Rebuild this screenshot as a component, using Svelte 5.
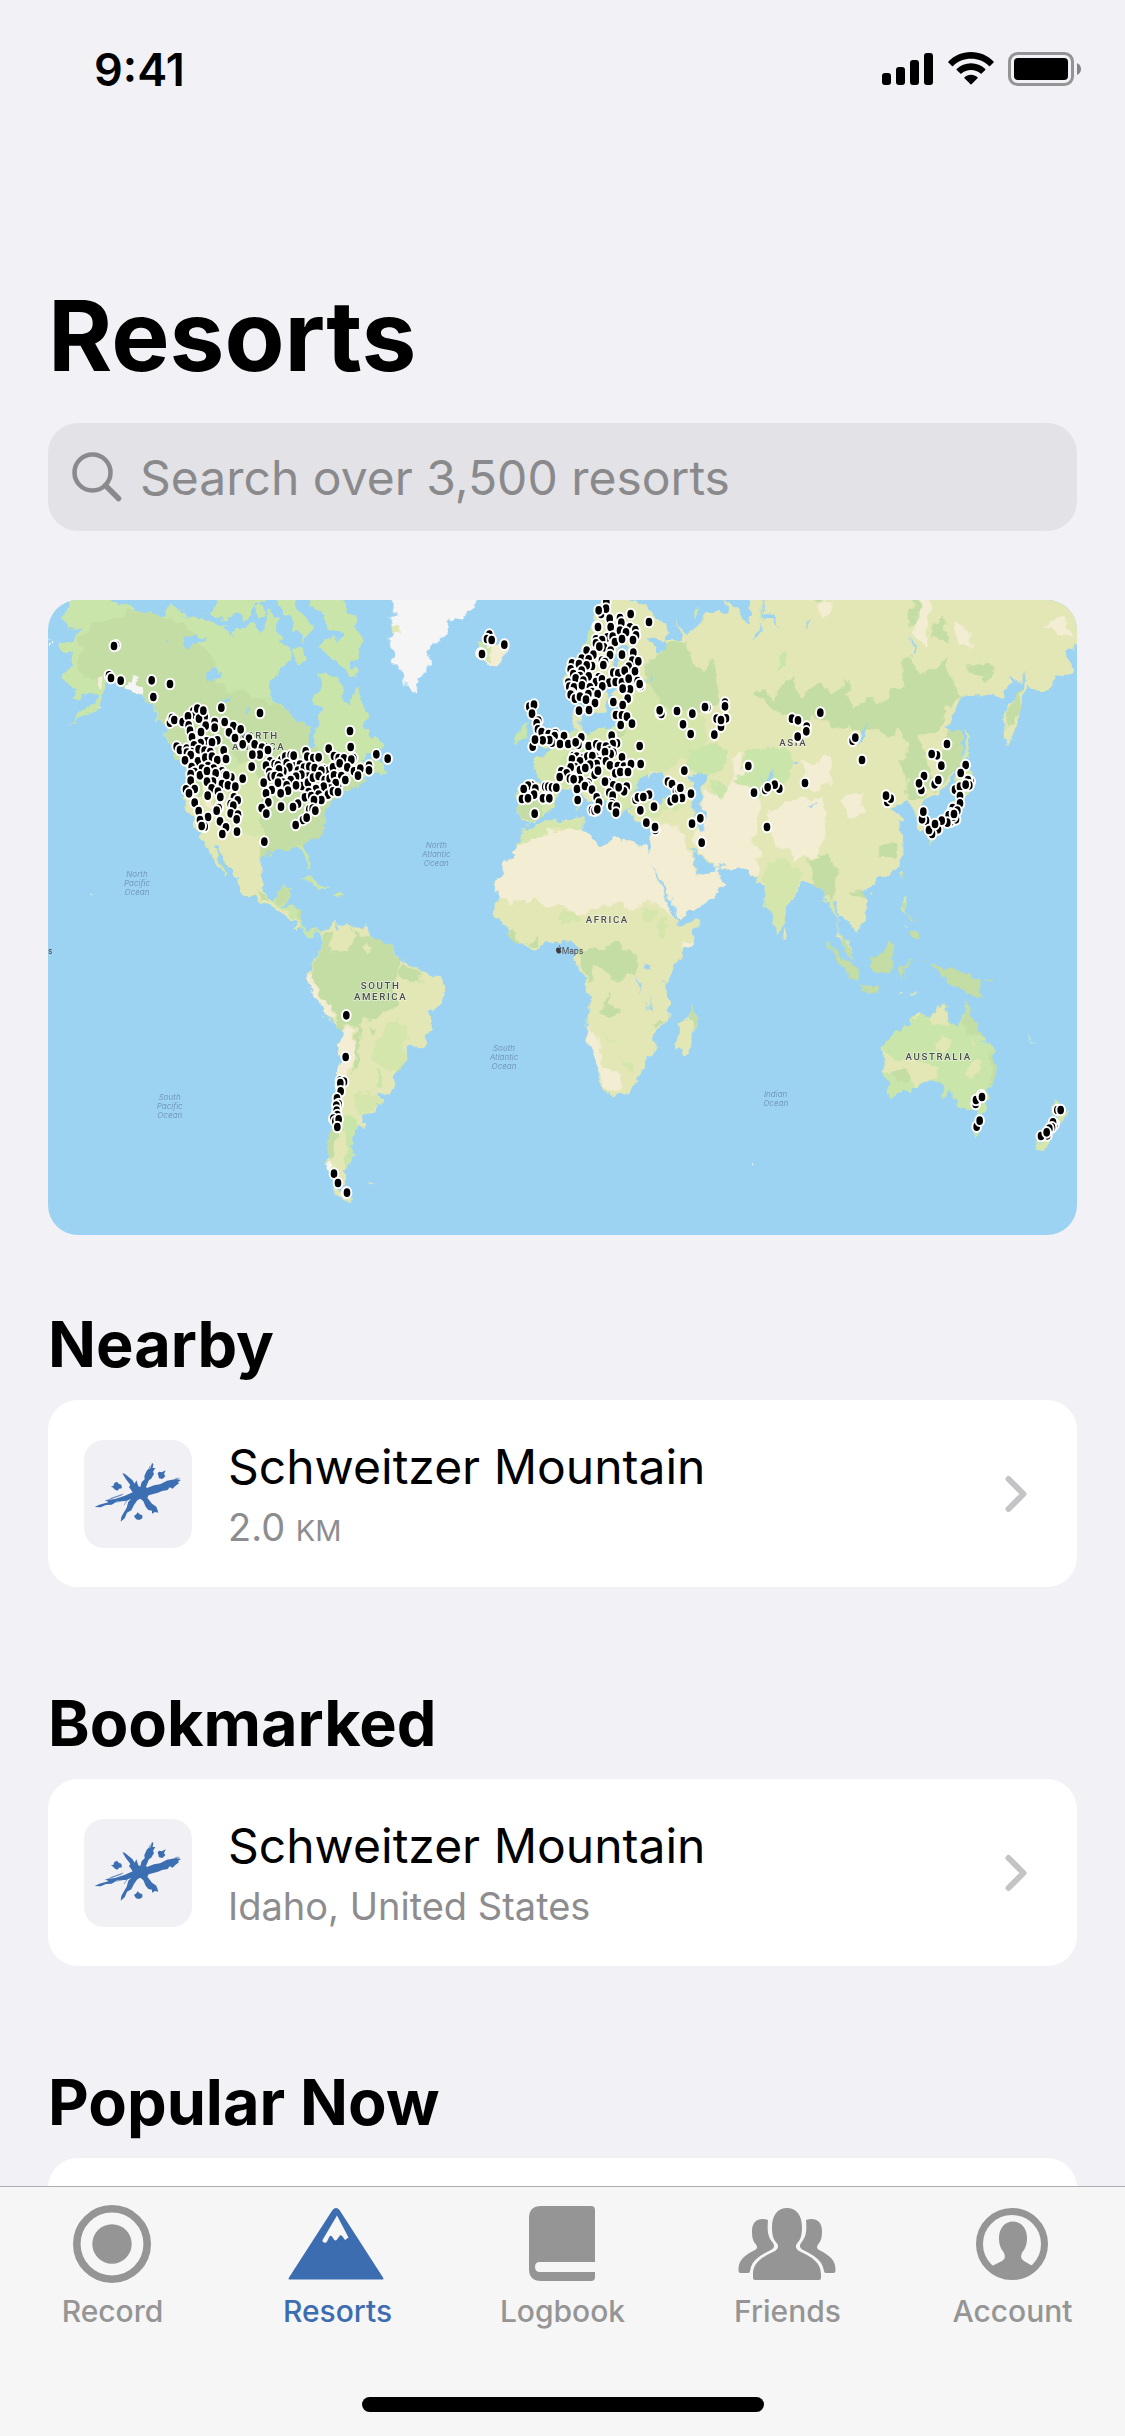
<script lang="ts">
	type Cluster = { x: number; y: number; points: string };

	// Resort positions, grouped by region. Each region has its own origin on the map.
	const clusters: Cluster[] = [
		{
			x: 0,
			y: 0,
			points: `204,136 198,138 183,226 189,234 218,242 311,241 366,252 316,291 520,323 636,339 906,393 366,368 372,354 379,360
				404,366 436,334 442,345 448,326 470,350 453,356 466,332 420,349 500,366 530,366 473,377 422,376 500,383 556,378 578,388
				426,392 459,396 543,397 432,412 561,414 603,416 508,421 476,424 458,429 492,427 584,433 620,433 386,440 396,450 416,446
				438,436 432,456 452,448 417,458 470,452 487,456 527,451 642,443 660,450 635,464 613,464 428,465 411,481 450,484 472,473
				492,470 508,480 534,477 611,500 480,498 462,506 431,501 440,516 497,506 522,514 456,526 477,513 503,520 428,522 530,524
				584,536 550,532 535,526 428,542 495,545 477,545 522,552 540,556 562,560 491,565 440,567 414,568 423,580 510,575 479,587
				517,591 558,592 569,601 440,608 548,612 556,617 452,633 512,624 506,632 548,640 570,644 480,651 566,658 456,660 516,664
				470,680 461,678 534,682 523,702 567,695 649,725 773,454 842,446 908,441 985,463 1019,476 666,484 700,480 712,470 728,466
				737,467 778,470 796,474 812,472 858,468 872,474 888,475 916,474 910,479 654,497 680,492 690,496 716,490 740,500 756,494
				724,502 664,516 684,520 706,514 693,508 668,530 680,528 696,532 750,512 768,503 784,500 800,504 826,508 842,512 855,502
				875,490 898,502 918,514 937,506 963,497 963,511 930,527 820,512 780,530 760,524 744,530 728,540 705,548 647,548 690,548
				716,556 762,558 744,556 780,548 795,533 812,528 830,540 845,536 858,526 880,528 892,540 870,560 863,549 846,566 827,560
				804,567 782,576 720,572 698,580 671,570 654,580 661,607 641,624 655,641 699,620 750,611 735,621 771,592 790,588 812,584
				822,598 840,584 855,574 870,576 820,600 798,600 784,628 794,626 802,632 765,660 776,653 743,675`
		},
		{
			x: 1056,
			y: 0,
			points: `268,104 261,117 275,120 313,134 242,160 246,162 619,5 603,42 618,26 596,31 629,56 660,54 692,42 747,66 664,68 590,80
				594,81 632,81 660,92 690,82 706,90 678,97 708,106 622,112 638,110 588,118 606,120 645,126 666,117 699,120 588,130 612,142
				632,152 598,140 560,152 580,164 630,165 666,164 700,158 545,176 566,178 606,182 615,186 697,182 715,184 516,190 537,192
				576,198 560,196 610,195 686,200 640,218 655,220 674,212 705,214 512,208 545,212 520,222 540,228 566,229 596,232 505,248
				527,235 550,242 588,246 606,238 628,248 647,246 666,247 686,236 713,243 722,258 719,252 690,268 668,266 508,260 522,262
				546,256 570,262 576,276 607,259 515,280 512,284 525,296 540,290 565,282 593,282 558,299 585,309 640,306 683,296 668,315
				537,332 567,330 648,345 666,346 681,350 662,375 696,371 780,340 784,342 779,331 831,333 877,341 849,373 872,402 922,322
				915,321 975,308 975,319 950,356 978,355 963,380 963,360 943,404 388,320 402,314 396,341 415,362 410,370 414,388 425,396
				446,402 466,400 464,408 438,420 456,428 448,420 428,421 398,440 405,419 492,408 480,432 505,432 544,412 535,434 527,427
				566,438 589,433 600,440 635,407 651,430 638,432 618,440 628,452 640,458 632,462 615,456 719,438 666,472 520,468 530,470
				516,478 548,476 562,470 586,470 598,484 577,468 618,484 590,492 570,494 540,484 526,502 512,502 540,510 556,504 484,514
				500,520 479,531 510,536 540,540 521,538 566,548 584,524 594,512 630,496 654,498 672,500 693,492 722,492 646,520 676,516
				661,516 684,516 853,512 624,546 615,545 640,556 680,560 672,574 656,562 394,556 384,557 371,567 406,566 436,560 445,560
				456,562 469,563 402,584 366,597 384,595 429,595 448,595 404,641 531,567 562,556 555,558 576,569 533,600 590,592 597,608
				576,630 584,632 592,628 628,578 638,587 636,610 634,618 650,620 648,638 804,545 816,552 828,574 836,570 841,564 873,581
				846,594 812,604 825,596 707,599 714,592 747,584 730,591 721,631 762,620 739,668 766,690 765,681 876,671 901,655 905,728
				1045,498 1063,578`
		},
		{
			x: 2076,
			y: 0,
			points: `241,338 156,356 174,361 200,380 199,394 173,410 195,549 118,566 104,554 76,570 83,562 42,578 25,498 81,681
				338,422 346,413 366,480 442,606 452,596 438,587 621,432 591,466 575,462 604,497 552,528 584,553 595,540 544,570 537,550
				558,662 546,658 550,635 677,495 662,519 692,545 684,540 676,556 645,569 660,560 688,556 677,554 660,588 660,610 638,624
				652,632 632,640 628,648 634,664 648,658 640,650 626,646 642,642 622,668 594,688 576,702 567,690 605,662 585,672`
		},
		{
			x: 0,
			y: 900,
			points: `895,346 893,471 876,542 888,545 876,556 877,549 878,574 867,595 872,612 865,617 866,632 868,645 856,656 862,664
				872,658 868,681 858,821 870,849 894,878 897,878`
		},
		{
			x: 1536,
			y: 900,
			points: `1247,612 1248,600 1264,586 1266,591 1250,680 1259,662 1492,630 1502,630 1484,672 1479,667 1476,682 1468,686
				1462,706 1443,708 1460,697`
		}
	];

	const markers = clusters.flatMap((c) =>
		c.points
			.trim()
			.split(/\s+/)
			.map((pair) => {
				const [px, py] = pair.split(',').map(Number);
				return { x: c.x + px, y: c.y + py };
			})
	);

	const places = [
		{ x: 632, y: 416, lines: ['NORTH', 'AMERICA'], kind: 'land' },
		{ x: 998, y: 1166, lines: ['SOUTH', 'AMERICA'], kind: 'land' },
		{ x: 1678, y: 969, lines: ['AFRICA'], kind: 'land' },
		{ x: 2236, y: 437, lines: ['ASIA'], kind: 'land' },
		{ x: 2672, y: 1380, lines: ['AUSTRALIA'], kind: 'land' },
		{ x: 267, y: 830, lines: ['North', 'Pacific', 'Ocean'], kind: 'sea' },
		{ x: 1165, y: 744, lines: ['North', 'Atlantic', 'Ocean'], kind: 'sea' },
		{ x: 365, y: 1499, lines: ['South', 'Pacific', 'Ocean'], kind: 'sea' },
		{ x: 1368, y: 1354, lines: ['South', 'Atlantic', 'Ocean'], kind: 'sea' },
		{ x: 2183, y: 1491, lines: ['Indian', 'Ocean'], kind: 'sea' }
	];

	const sections = [
		{ title: 'Nearby', resort: 'Schweitzer Mountain', detail: '2.0', unit: 'KM' },
		{ title: 'Bookmarked', resort: 'Schweitzer Mountain', detail: 'Idaho, United States', unit: '' }
	];

	const tabs = ['Record', 'Resorts', 'Logbook', 'Friends', 'Account'];

	let active = $state('Resorts');
	let query = $state('');
</script>

<div class="app">
	<header class="status-bar">
		<span class="time">9:41</span>
		<div class="status-icons">
			<svg width="52" height="34" viewBox="0 0 52 34" aria-hidden="true">
				<rect x="0" y="21" width="9" height="12" rx="3" />
				<rect x="14" y="15" width="9" height="18" rx="3" />
				<rect x="28" y="8" width="9" height="25" rx="3" />
				<rect x="42" y="1" width="9" height="32" rx="3" />
			</svg>
			<svg width="46" height="34" viewBox="0 0 46 34" aria-hidden="true">
				<path d="M23 0C14 0 6 3.600 0.400 9.500Q0 10 0.400 10.500L4 14Q4.500 14.400 5 14C10 9.300 16 6.800 23 6.800S36 9.300 41 14Q41.500 14.400 42 14L45.600 10.500Q46 10 45.600 9.500C40 3.600 32 0 23 0Z" />
				<path d="M23 11.200C17.500 11.200 12.500 13.300 8.700 16.900Q8.300 17.400 8.700 17.900L12.400 21.600Q12.900 22 13.400 21.600C16 19.300 19.300 18 23 18S30 19.300 32.600 21.600Q33.100 22 33.600 21.600L37.300 17.900Q37.700 17.400 37.300 16.900C33.500 13.300 28.500 11.200 23 11.200Z" />
				<path d="M23 22.800C20.400 22.800 18.200 23.700 16.500 25.200Q16 25.700 16.500 26.200L22.500 32.300Q23 32.800 23.500 32.300L29.500 26.200Q30 25.700 29.500 25.200C27.800 23.700 25.600 22.800 23 22.800Z" />
			</svg>
			<svg width="74" height="34" viewBox="0 0 74 34" aria-hidden="true">
				<rect x="1.500" y="1.500" width="63" height="31" rx="8" fill="none" stroke="#949496" stroke-width="3" />
				<rect x="6" y="6" width="54" height="22" rx="4" />
				<path d="M69 11Q73 13 73 17T69 23Z" fill="#858587" />
			</svg>
		</div>
	</header>

	<main>
		<h1>Resorts</h1>

		<label class="search">
			<svg width="50" height="50" viewBox="0 0 50 50" fill="none" aria-hidden="true">
				<circle cx="20.500" cy="20.500" r="18" stroke="currentColor" stroke-width="4.500" />
				<path d="M33.500 33.500L46.500 46.500" stroke="currentColor" stroke-width="5.500" stroke-linecap="round" />
			</svg>
			<input type="search" placeholder="Search over 3,500 resorts" aria-label="Search resorts" bind:value={query} />
		</label>

		<svg class="map" viewBox="0 0 3087 1905" role="img" aria-label="World map of resorts">
			<!-- Roughens coastlines and terrain borders -->
			<filter id="terrain" filterUnits="userSpaceOnUse" x="0" y="0" width="3087" height="1905" color-interpolation-filters="sRGB">
				<feTurbulence type="fractalNoise" baseFrequency="0.025" numOctaves="3" seed="4" />
				<feDisplacementMap in="SourceGraphic" scale="44" xChannelSelector="R" yChannelSelector="G" />
			</filter>

			<g filter="url(#terrain)">
				<!-- Americas -->
				<g class="green">
					<path d="M75 -30L62 25 38 50 65 75 90 92 75 125 35 130 30 140 62 150 72 165 78 195 50 212 45 240 62 265 85 275 80 290 110 285 135 275 148 290 130 310 100 340 68 374 110 350 150 318 165 285 185 240 225 252 270 275 290 295 312 305 330 340 345 385 365 425 390 465 412 490 410 550 405 590 425 640 440 690 465 700 480 740 505 790 532 832 525 800 505 765 490 735 500 730 530 785 555 820 572 850 575 875 610 895 650 915 690 930 720 945 745 965 750 985 785 1012 800 997 818 1012 820 1000 800 990 775 997 760 975 760 930 735 920 702 918 720 905 732 858 705 857 695 885 668 898 645 875 635 830 640 775 660 758 700 748 740 745 765 752 778 775 785 808 792 795 788 760 776 738 800 705 825 680 830 640 838 610 865 598 885 570 895 548 915 562 960 538 940 525 1000 522 1028 508 1005 500 1005 485 960 486 925 482 960 462 1000 455 1003 440 965 400 945 375 960 345 935 290 925 265 910 308 885 290 880 250 855 228 810 222 815 260 800 300 817 340 800 390 798 440 783 438 772 375 745 355 705 328 668 300 663 265 672 235 700 200 735 160 710 140 688 125 700 95 660 60 640 95 610 75 570 80 552 110 525 75 490 78 440 52 410 50 375 5 350 40 310 50 260 25 200 12 150 -30Z" />
					<path d="M470 -20L510 15 480 40 530 55 560 40 600 58 640 20 660 -20ZM680 -20L700 40 730 50 750 95 770 120 800 80 760 40 740 -20ZM775 -20L800 25 830 50 840 90 880 100 870 130 835 115 810 150 850 170 890 210 922 228 915 190 935 170 950 110 915 75 930 50 890 30 880 -20ZM735 155L760 130 780 180 750 195ZM625 25L650 15 655 50 635 50ZM660 30L690 60 680 95 655 75Z" />
					<path d="M755 838L790 835 840 865 800 858ZM850 885L875 872 890 885 860 892ZM305 310L335 360 330 378Z" />
				</g>
				<path class="deep" d="M150 70L200 60 260 25 330 45 390 60 430 100 460 125 500 190 510 240 540 270 600 280 660 300 705 330 745 355 772 375 783 438 800 440 830 460 880 465 960 545 885 570 830 640 825 680 776 738 700 748 640 770 600 690 590 560 560 450 500 350 470 380 500 650 440 690 410 590 412 490 345 385 312 305 225 252 150 240 90 220 100 170 90 110Z" />
				<path class="deep" d="M550 280L620 300 680 330 735 370 775 450 800 480 680 500 560 470 480 400 460 320Z" />
				<path class="pale" d="M540 500L600 480 640 560 640 700 590 760 550 690 520 560Z" />
				<path class="khaki" d="M432 545L450 590 490 580 500 600 530 580 570 620 575 690 620 700 635 740 640 800 645 875 668 898 700 918 735 950 760 985 745 985 740 965 690 930 610 895 575 875 572 850 500 730 490 735 532 832 505 790 465 700 440 690 425 640 410 590Z" />
				<path class="deep" d="M625 870L645 880 660 900 640 900ZM700 860L730 860 715 905 690 905ZM735 925L760 930 760 970Z" />
				<path class="sand" d="M144 228L165 230 160 262 145 250ZM460 540L480 560 500 640 480 620ZM500 540L525 545 530 570 505 570Z" />
				<path class="snow" d="M228 258L250 240 280 250 285 288 260 270Z" />
				<path class="water" d="M400 122L460 105 480 115 440 130 435 155ZM470 250L480 215 530 210 500 240ZM520 300L550 285 535 305ZM592 325L603 320 597 345ZM655 480L720 490 770 540 810 530 760 510 710 475ZM350 125L365 110 360 130ZM895 390L905 372 915 392Z" />

				<g transform="translate(0 900)">
					<path class="khaki" d="M815 105L835 90 865 58 868 75 900 72 945 78 985 120 1030 130 1052 165 1050 185 1090 195 1140 215 1180 240 1187 270 1175 300 1150 330 1147 390 1128 438 1085 445 1065 475 1060 510 1040 535 1020 583 985 580 995 615 985 638 947 642 945 670 922 675 918 720 900 745 915 770 900 800 888 815 888 845 875 870 918 895 890 905 865 880 850 850 845 810 835 790 840 750 850 720 855 650 862 600 868 520 878 440 878 385 835 350 815 310 783 240 792 190 815 150Z" />
					<path class="deep" d="M820 110L850 90 845 160 895 145 930 110 900 80 975 112 1030 130 1052 170 1055 225 1040 260 1050 320 1000 340 930 370 935 400 930 480 920 520 915 480 925 380 870 385 860 340 830 310 790 220 795 190 815 150ZM1060 195L1120 210 1120 245 1080 245 1058 225ZM1025 490L1065 455 1060 510 1045 525ZM970 375L992 380 980 405ZM870 355L910 380 870 380Z" />
					<path class="pale" d="M1025 370L1075 370 1080 440 1065 475 1045 520 1000 500 965 480 990 430ZM920 580L980 580 995 615 945 642 920 615Z" />
					<path class="green" d="M880 640L925 650 918 720 900 745 915 770 888 815 890 740ZM985 515L1000 515 1005 555 988 550Z" />
					<path class="deep" d="M855 660L870 690 865 745 848 775 835 755Z" />
					<path class="sand" d="M878 385L915 385 920 470 905 540 870 560 868 520 878 440ZM790 225L830 300 860 360 835 350 815 310 783 240Z" />
					<path class="khaki" d="M895 90L920 90 915 120 870 160 850 160 870 120ZM955 130L972 150 968 168 952 155ZM960 848L985 838 975 850Z" />
					<path class="water" d="M862 65L872 90 862 92Z" />
					<path class="snow" d="M843 780L856 795 848 815 838 795Z" />
				</g>

				<g transform="translate(1056 0)">
					<path class="snow" d="M-40 -30L-15 40 -30 80 -32 115 -12 165 -10 200 20 250 35 255 48 272 58 265 52 225 88 200 92 140 120 118 145 95 148 58 185 65 200 40 235 12 230 -30Z" />
					<path class="khaki" d="M-28 75L0 72 -5 110 -34 105Z" />
					<path class="sand" d="M235 158L265 138 320 135 318 155 290 190 262 190 245 178Z" />
					<path class="green" d="M228 125L250 122 262 150 275 145 262 175 235 165ZM355 385L382 370 380 420 350 435Z" />

					<!-- Africa -->
					<path class="khaki" d="M385 680L430 665 540 655 550 700 620 745 640 715 730 735 745 760 780 860 830 955 832 978 895 965 880 1020 825 1090 795 1150 807 1250 755 1302 760 1352 740 1380 710 1450 690 1475 625 1485 585 1380 555 1270 575 1210 560 1140 530 1090 540 1050 490 1023 444 1035 364 1043 320 980 289 950 295 900 285 855 310 800 350 745 355 720Z" />
					<path class="sand" d="M350 745L430 695 530 690 550 700 620 745 640 715 730 735 745 760 780 860 830 955 800 930 750 905 700 930 650 910 560 940 440 910 330 905 295 905 285 855 310 800ZM845 1020L880 1020 865 1045ZM555 1270L590 1310 610 1400 660 1430 660 1465 625 1470 585 1380Z" />
					<path class="pale" d="M355 720L385 680 430 665 540 657 548 695 480 680 430 695 350 745ZM485 930L540 935 545 960 490 965ZM730 925L765 935 765 960 735 965ZM780 950L808 970 800 1015 775 1015ZM605 1300L640 1330 630 1335ZM670 1380L700 1395 690 1420Z" />
					<path class="deep" d="M535 1060L580 1040 600 1045 655 1028 675 1050 715 1065 710 1120 645 1145 625 1120 580 1090 570 1150 555 1120ZM608 1245L620 1185 660 1245ZM763 1275L780 1250 797 1255 765 1282ZM320 990L350 1000 370 1040 350 1035ZM380 1035L410 1005 420 1030Z" />
					<path class="water" d="M728 1090L750 1090 750 1110 730 1112ZM706 1120L714 1140 725 1180 712 1160ZM748 1188L758 1240 752 1240Z" />
					<path class="khaki" d="M883 1220L893 1250 865 1365 845 1370 832 1335 840 1260 870 1250Z" />
					<path class="deep" d="M883 1220L892 1255 880 1285 872 1250Z" />

					<!-- Europe and Asia -->
					<path class="khaki" d="M620 -30L590 30 578 75 575 130 555 150 500 195 495 250 515 300 545 305 570 290 590 350 605 330 625 290 615 250 630 205 650 150 670 120 690 130 680 165 645 200 640 235 680 232 735 240 735 255 680 262 650 275 635 290 660 320 645 375 610 385 560 395 542 385 545 355 530 320 522 360 525 395 490 410 460 440 450 465 440 470 430 490 395 490 425 510 430 560 360 555 355 650 385 672 430 650 445 620 480 570 530 560 545 580 590 620 580 645 600 625 605 600 560 540 590 525 610 580 630 625 650 660 670 620 690 600 702 565 715 525 740 515 750 535 790 515 795 545 830 590 790 605 730 598 685 620 700 660 765 670 760 740 745 760 800 850 840 952 930 905 972 850 950 805 905 825 870 745 895 770 950 805 1020 805 1055 830 1085 850 1092 900 1130 1003 1150 970 1155 920 1210 855 1240 850 1270 880 1285 915 1310 900 1315 950 1310 1000 1335 1050 1355 1078 1350 1040 1315 995 1315 950 1345 965 1370 995 1405 950 1400 915 1375 885 1410 850 1470 830 1510 770 1510 720 1490 670 1515 655 1480 630 1510 605 1540 625 1560 690 1590 680 1570 640 1575 600 1620 580 1660 520 1685 440 1680 400 1640 375 1690 290 1740 285 1800 290 1840 232 1860 250 1885 215 1870 260 1820 320 1810 360 1820 440 1845 385 1870 300 1880 258 1935 268 1980 225 2015 215 2005 160 2060 120 2060 -30 1860 -30 1860 20 1920 20 1935 45 1950 15 1970 -30 1090 -30 1095 40 1120 50 1140 85 1115 60 1095 60 1080 110 1062 118 1092 70 1085 0 1060 -30 1045 65 1010 30 965 -5 990 40 930 35 910 60 850 100 830 60 845 120 800 120 805 165 750 135 740 110 795 125 810 100 790 65 740 25 700 0Z" />
					<path class="pale" d="M395 490L460 445 525 395 560 395 660 370 720 250 800 300 900 330 930 410 860 480 790 515 750 520 715 525 700 600 650 655 600 560 500 560 430 650 355 650 360 555 430 555ZM1092 900L1085 830 1110 790 1150 780 1220 830 1155 920 1150 970 1130 1003ZM690 600L790 605 830 595 860 620 790 640 700 650Z" />
					<path class="green" d="M525 400L570 400 600 470 560 560 500 560 480 480ZM860 450L960 430 980 490 920 540 860 490ZM1040 460L1100 440 1180 450 1170 540 1100 590 1040 600 1010 540ZM940 540L990 570 980 620 940 600ZM580 60L600 50 590 130 560 180 540 180ZM1135 165L1155 160 1160 200 1140 210Z" />
					<path class="deep" d="M810 130L860 120 880 190 900 220 940 170 955 240 950 310 880 340 800 330 770 290 740 250 735 190ZM1050 280L1090 270 1120 300 1140 250 1180 230 1190 280 1230 270 1260 250 1310 280 1340 230 1340 280 1370 320 1400 290 1440 310 1480 270 1510 260 1505 180 1540 170 1555 230 1590 210 1640 180 1660 250 1690 290 1640 330 1620 380 1585 400 1560 420 1570 470 1610 540 1570 600 1510 600 1530 540 1500 490 1530 430 1490 380 1460 420 1430 380 1390 400 1350 370 1300 390 1240 340 1220 370 1180 340 1130 330ZM1540 -20L1580 -20 1560 70 1525 75ZM1600 80L1630 50 1640 120 1600 120ZM1230 780L1290 760 1310 820 1300 910 1270 880 1240 850ZM1655 380L1680 400 1690 480 1600 580 1620 500ZM1860 260L1860 340 1815 385 1825 330ZM1700 190L1780 200 1760 240 1710 230ZM360 600L420 600 430 650 390 665 358 650ZM655 370L680 400 640 410ZM1440 740L1490 720 1480 780 1440 780ZM1350 880L1385 860 1390 900ZM1240 -10L1270 -10 1260 10Z" />
					<path class="sand" d="M760 690L800 672 835 680 860 740 905 825 950 805 972 850 930 905 840 952 790 860 745 765ZM910 560L960 600 1000 540 1070 580 1080 690 1050 720 1090 750 1060 830 1020 805 950 805 895 760 880 700 910 640ZM1100 620L1180 600 1270 590 1290 660 1250 770 1190 780 1110 710ZM1200 490L1290 470 1290 550 1220 570ZM1320 590L1380 580 1390 640 1340 650ZM1560 -25L1590 -25 1580 140 1545 100ZM1240 10L1300 10 1280 50 1250 40ZM1660 60L1700 80 1710 150 1680 140ZM1930 80L1990 50 2020 100 1960 95ZM1000 470L1020 460 1030 530 1000 540Z" />
					<path class="water" d="M865 540L895 515 925 530 895 570 925 640 915 690 890 680 880 620ZM755 210L770 240 760 250ZM1365 430L1390 390 1408 360 1405 400 1375 438ZM1095 535L1115 515 1125 520 1105 540ZM1175 490L1195 495 1185 505ZM1230 620L1250 605 1245 620ZM1530 110L1550 165 1535 155ZM1215 75L1225 62 1222 85ZM640 250L740 245 725 262 650 262Z" />
					<path class="pale" d="M385 310L410 310 405 350 425 385 460 400 460 430 395 450 400 420 420 400 400 370ZM875 35L888 30 888 50ZM1270 900L1300 900 1310 960ZM528 620L540 600 535 635ZM565 635L590 635 585 655ZM1695 400L1705 400 1708 475 1690 475ZM1695 490L1720 520 1710 560 1690 600 1680 640 1660 670 1620 690 1590 705 1610 670 1650 640 1670 600 1665 540ZM1505 815L1515 808 1508 840ZM1505 890L1515 890 1520 950 1505 930ZM1405 880L1418 870 1412 888ZM1590 715L1600 720 1595 735Z" />
				</g>

				<!-- South-east Asia and Oceania -->
				<g transform="translate(1536 900)">
					<path class="deep" d="M840 95L858 125 880 178 850 150ZM803 133L830 150 895 215 893 248 870 232 840 185ZM922 185L960 160 990 120 1008 132 1003 180 985 222 935 215ZM895 255L940 258 970 272 930 272ZM1012 200L1035 185 1062 180 1030 195 1040 230 1028 215 1018 240ZM1115 195L1140 195 1145 215 1175 203 1235 225 1260 255 1283 298 1250 275 1215 285 1185 260ZM1045 100L1070 88 1075 118 1055 118ZM1265 245L1300 235 1285 250ZM1020 0L1035 0 1035 35ZM1040 38L1050 45 1065 65 1050 60ZM1088 183L1095 180 1090 190Z" />
					<path class="khaki" d="M670 90L687 110 682 125 670 120ZM1012 280L1045 278 1030 284ZM1055 290L1080 278 1060 295ZM1405 410L1427 430 1410 420ZM1041 70L1046 90 1040 85Z" />
					<path class="green" d="M965 435L1000 412 1040 375 1075 340 1100 350 1135 312 1162 318 1155 348 1195 380 1207 350 1215 303 1235 345 1250 395 1305 460 1310 510 1285 580 1278 625 1245 635 1220 640 1195 622 1190 598 1170 565 1155 590 1130 550 1100 543 1055 570 1020 578 995 590 978 580 982 545 965 480ZM1240 690L1265 688 1250 708Z" />
					<path class="khaki" d="M1105 350L1130 312 1162 318 1155 350 1175 380 1150 375 1110 360ZM1058 365L1080 338 1090 350 1065 370ZM965 450L1000 480 1040 470 1080 490 1140 500 1140 530 1055 570 1050 520 1000 510 970 505ZM1120 440L1150 405 1175 410 1165 450 1130 455ZM1230 480L1262 490 1250 525 1225 530ZM1235 415L1250 440 1240 450Z" />
					<path class="deep" d="M1215 303L1235 345 1250 395 1270 415 1240 405 1210 380ZM1290 450L1310 480 1308 530 1285 550 1300 500ZM1000 505L1050 520 1045 545 1010 540Z" />
					<path class="pale" d="M1425 745L1450 705 1480 690 1450 755ZM1485 590L1495 600 1500 640 1525 630 1505 678 1485 650Z" />
					<path class="snow" d="M573 793L582 800 575 806Z" />
				</g>
				<path class="snow" d="M130 872L137 874 133 882ZM146 322L156 320 152 328ZM0 118L6 126 0 138Z" />
			</g>

			{#each places as place}
				<text class={place.kind} x={place.x} y={place.y}>
					{#each place.lines as line, i}
						<tspan x={place.x} y={place.y + i * (place.kind === 'land' ? 35 : 27)}>{line}</tspan>
					{/each}
				</text>
			{/each}

			<text class="brand" x="0" y="1061">s</text>
			<text class="brand" x="1541" y="1061">Maps</text>
			<path class="apple" d="M1533 1044q5 -4 7 0 -4 5 0 11 -3 7 -7 5 -4 2 -7 -3 -4 -9 0 -13 4 -3 7 0zM1532 1041q0 -5 4 -6 0 5 -4 6z" />

			{#each markers as m}
				<ellipse class="marker" cx={m.x} cy={m.y} rx="13" ry="16" />
			{/each}
		</svg>

		{#each sections as section}
			<section>
				<h2>{section.title}</h2>
				<button class="card" type="button">
					<span class="logo">
						<svg viewBox="12 30 324 324" aria-hidden="true">
							<path d="M44 231L58 224 85 217 78 211 105 207 135 197 158 187 147 171 151 165 138 148 127 130 134 131 157 150 164 161 169 151 175 169 181 171 185 156 194 148 193 138 201 121 211 115 216 99 220 102 218 114 226 114 219 125 222 132 213 147 207 150 198 171 201 174 222 166 240 163 261 152 288 147 303 150 294 156 297 160 286 168 278 176 269 172 263 180 246 183 234 188 206 196 202 203 216 221 229 230 235 248 225 246 216 251 216 242 205 240 197 230 190 214 181 206 172 211 162 225 154 241 141 248 134 265 122 275 124 261 131 248 140 233 145 215 153 207 137 213 112 214 95 224 78 225 62 232Z" />
							<path d="M93 168L100 168 103 159 111 155 116 161 124 164 126 175 117 176 113 182 105 179 100 174ZM233 129L238 125 245 127 257 121 252 132 256 139 247 147 237 145 235 137ZM162 258L169 253 173 247 179 253 187 256 187 265 178 270 168 268Z" />
							<path class="bristle" d="M75 213L125 195M91 206L130 192M132 225L145 206M211 107L205 120M286 145L299 145M218 238L233 240M140 145L146 155M109 217L145 207" />
						</svg>
					</span>
					<span class="info">
						<span class="name">{section.resort}</span>
						<span class="detail">{section.detail}{#if section.unit}&nbsp;<small>{section.unit}</small>{/if}</span>
					</span>
					<svg class="chevron" width="22" height="38" viewBox="0 0 22 38" fill="none" aria-hidden="true">
						<path d="M3.500 4L18.500 19 3.500 34" stroke="currentColor" stroke-width="6" stroke-linecap="round" stroke-linejoin="round" />
					</svg>
				</button>
			</section>
		{/each}

		<section>
			<h2>Popular Now</h2>
			<div class="card"></div>
		</section>
	</main>

	<nav class="tab-bar">
		<div class="tabs">
			{#each tabs as tab}
				<button type="button" class="tab" class:active={active === tab} onclick={() => (active = tab)}>
					<svg width="100" height="80" viewBox="1 0 100 80" fill="currentColor" aria-hidden="true">
						{#if tab === 'Record'}
							<circle cx="50" cy="40" r="35.200" fill="none" stroke="currentColor" stroke-width="7.600" />
							<circle cx="50" cy="40" r="19.700" />
						{:else if tab === 'Resorts'}
							<path fill-rule="evenodd" d="M2 75.500Q1 75.500 2 73.500L45.500 6Q49 2 52.500 6L96 73.500Q97 75.500 96 75.500ZM50 11.500L35.500 36Q35 38 37 38.500 39 39.500 40 37.500L42.500 32.500Q43.500 31 45 32.500L47 35.500Q48.500 37.500 50 35.500L52.500 32Q54 30.500 55.500 32.500L58 36 61.500 33.500Z" />
						{:else if tab === 'Logbook'}
							<path fill-rule="evenodd" d="M29 2H79Q83 2 83 6V58H28Q23 58 23 63T28 68H83V73Q83 77 79 77H29Q17 77 17 65V14Q17 2 29 2Z" />
						{:else if tab === 'Friends'}
							<path d="M50 4C59 4 65 11 65 23 65 31 64 35 60 39.500 58 42 59 45 62 47 73 52 84 58 84 70V74Q84 76 82 76H18Q16 76 16 74V70C16 58 27 52 38 47 41 45 42 42 40 39.500 36 35 35 31 35 23 35 11 41 4 50 4Z" />
							<path d="M31 16C30 28 31 33 36 39Q39 43 34 46C24 51 15 55 13 67Q13 69 11 69H3.500Q1.500 69 1.500 67C1 56 7 52 16 47 20 45 21 44 19 40.500 16 37 15 34 15 27 15 17 22 13 31 16Z" />
							<path d="M69 16C70 28 69 33 64 39Q61 43 66 46C76 51 85 55 87 67Q87 69 89 69H96.500Q98.500 69 98.500 67C99 56 93 52 84 47 80 45 79 44 81 40.500 84 37 85 34 85 27 85 17 78 13 69 16Z" />
						{:else}
							<circle cx="50" cy="40" r="32.500" fill="none" stroke="currentColor" stroke-width="7" />
							<path d="M51 17.500C59 17.500 65 24 65 34 65 41 63 45 60.500 48Q57 54 62 57L70.500 62Q62 73 50 73T30 62L40 57Q45 54 41.500 48C39 45 37 41 37 34 37 24 43 17.500 51 17.500Z" />
						{/if}
					</svg>
					<span>{tab}</span>
				</button>
			{/each}
		</div>
		<div class="home-indicator"></div>
	</nav>
</div>

<style>
	:global(body) {
		background: #f2f1f6;
	}

	.app {
		min-height: 100vh;
		background: #f2f1f6;
		color: #000;
		font-family: Inter, 'Liberation Sans', sans-serif;
	}

	.status-bar {
		display: flex;
		align-items: center;
		justify-content: space-between;
		height: 138px;
		margin-bottom: 138px;
		padding: 0 43px 0 94px;
	}

	.time {
		font-size: 45px;
		font-weight: 600;
	}

	.status-icons {
		display: flex;
		align-items: center;
		gap: 14px;
	}

	main {
		padding: 0 48px;
	}

	h1 {
		margin: 0 0 27px;
		font-size: 98px;
		font-weight: 700;
		line-height: 120px;
	}

	.search {
		display: flex;
		align-items: center;
		gap: 18px;
		height: 108px;
		margin-bottom: 69px;
		padding: 0 24px;
		border-radius: 30px;
		background: #e3e2e7;
		color: #8a8a8d;
	}

	input {
		flex: 1;
		min-width: 0;
		padding: 0;
		border: none;
		background: transparent;
		color: #000;
		font: inherit;
		font-size: 48px;
		outline: none;
	}

	input::placeholder {
		color: #8a8a8d;
		opacity: 1;
	}

	.map {
		display: block;
		width: 100%;
		height: auto;
		margin-bottom: 70px;
		border-radius: 30px;
		background: #9dd3f2;
	}

	.water {
		fill: #9dd3f2;
	}

	.green {
		fill: #c9e5a9;
	}

	.deep {
		fill: #c4dda4;
	}

	.pale {
		fill: #d4e6ab;
	}

	.khaki {
		fill: #e3e7b6;
	}

	.sand {
		fill: #f3edd3;
	}

	.snow {
		fill: #f5f5f5;
	}

	.marker {
		fill: #000;
		stroke: #fff;
		stroke-width: 6px;
	}

	.land {
		fill: #4c4c50;
		stroke: #fff;
		stroke-opacity: 0.6;
		stroke-width: 4px;
		paint-order: stroke;
		font-family: Roboto, sans-serif;
		font-size: 29px;
		font-weight: 500;
		letter-spacing: 5px;
		text-anchor: middle;
	}

	.sea {
		fill: #7399bd;
		font-size: 24px;
		font-style: italic;
		text-anchor: middle;
	}

	.brand {
		fill: #4c4c50;
		font-size: 25px;
	}

	.apple {
		fill: #3c3c40;
	}

	section {
		margin-bottom: 97px;
	}

	h2 {
		margin: 0 0 17px;
		font-size: 63px;
		font-weight: 700;
		line-height: 78px;
	}

	.card {
		display: flex;
		align-items: center;
		gap: 36px;
		box-sizing: border-box;
		width: 100%;
		min-height: 187px;
		padding: 24px 50px 24px 36px;
		border: none;
		border-radius: 30px;
		background: #fff;
		color: #000;
		font: inherit;
		text-align: left;
	}

	.logo {
		flex-shrink: 0;
		width: 108px;
		height: 108px;
		border-radius: 20px;
		background: #f1f0f5;
	}

	.logo svg {
		display: block;
		fill: #3c6eb2;
	}

	.bristle {
		fill: none;
		stroke: #3c6eb2;
		stroke-opacity: 0.6;
		stroke-width: 3px;
	}

	.info {
		display: flex;
		flex: 1;
		flex-direction: column;
		gap: 6px;
	}

	.name {
		font-size: 48px;
		line-height: 60px;
	}

	.detail {
		color: #8d8d90;
		font-size: 38px;
		line-height: 48px;
	}

	small {
		font-size: 29px;
		line-height: 1;
	}

	.chevron {
		flex-shrink: 0;
		color: #c4c4c6;
	}

	.tab-bar {
		position: fixed;
		right: 0;
		bottom: 0;
		left: 0;
		border-top: 1px solid #adadb1;
		background: #f6f6f6;
	}

	.tabs {
		display: flex;
		padding-top: 17px;
	}

	.tab {
		display: flex;
		flex: 1;
		flex-direction: column;
		align-items: center;
		gap: 9px;
		padding: 0;
		border: none;
		background: none;
		color: #959595;
		font: inherit;
		font-size: 30px;
		font-weight: 500;
		line-height: 36px;
	}

	.tab.active {
		color: #3c6db0;
	}

	.home-indicator {
		width: 402px;
		height: 15px;
		margin: 68px auto 24px;
		border-radius: 8px;
		background: #000;
	}
</style>
